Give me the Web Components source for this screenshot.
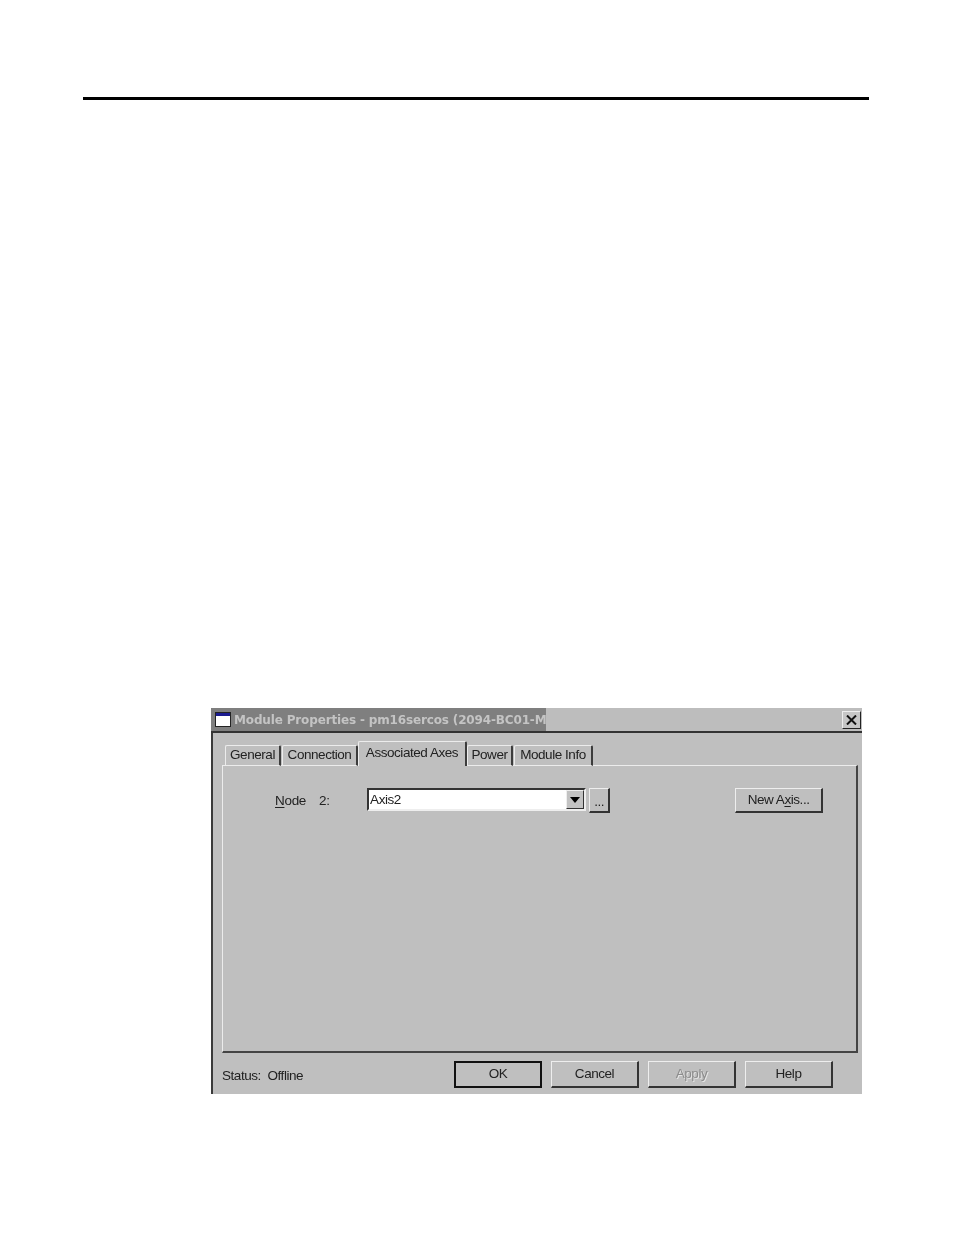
<!DOCTYPE html>
<html>
<head>
<meta charset="utf-8">
<title>Module Properties</title>
<style>
  html, body { margin: 0; padding: 0; background: #fff; }
  body { width: 954px; height: 1235px; overflow: hidden; font-family: "Liberation Sans", Arial, sans-serif; }
</style>
</head>
<body>
<doc-page>
  <module-dialog heading="Module Properties - pm16sercos (2094-BC01-M">
    <tab-strip>
      <dlg-tab w="56">General</dlg-tab>
      <dlg-tab w="76">Connection</dlg-tab>
      <dlg-tab w="109" active>Associated Axes</dlg-tab>
      <dlg-tab w="46">Power</dlg-tab>
      <dlg-tab w="79">Module Info</dlg-tab>
    </tab-strip>
    <axes-panel></axes-panel>
    <dlg-footer></dlg-footer>
  </module-dialog>
</doc-page>

<script>
function shadow(el, html) {
  el.attachShadow({ mode: "open" });
  el.shadowRoot.innerHTML = html;
}

class DocPage extends HTMLElement {
  connectedCallback() {
    shadow(this, `
      <style>
        :host { display: block; padding: 97px 85px 0 83px; }
        .rule { height: 3px; background: #000; }
        .body { padding: 608px 7px 0 128px; }
      </style>
      <div class="rule"></div>
      <div class="body"><slot></slot></div>
    `);
  }
}

class ModuleDialog extends HTMLElement {
  connectedCallback() {
    shadow(this, `
      <style>
        :host {
          display: flex; flex-direction: column; box-sizing: border-box;
          width: 651px; height: 386px; background: #bfbfbf;
          border-left: 2px solid #3a3a3a;
          font: 13.5px "Liberation Sans", Arial, sans-serif; letter-spacing: -.45px; color: #222;
          filter: blur(.4px);
        }
        .bar {
          display: flex; align-items: center; height: 23px; flex: none;
          margin-left: -2px; background: #bdbdbd; border-bottom: 2px solid #333;
        }
        .grad {
          display: flex; align-items: center; gap: 3px; width: 335px; height: 100%;
          box-sizing: border-box; padding-left: 4px; background: #7f7f7f;
        }
        .title { font: bold 12px "DejaVu Sans", Verdana, sans-serif; letter-spacing: -.15px; color: #c4c4c4; white-space: nowrap; }
        svg { display: block; flex: none; }
        .close {
          margin-left: auto; margin-right: 1px; width: 19px; height: 18px; box-sizing: border-box;
          background: #c6c6c6; border: 1px solid; border-color: #eee #222 #222 #eee;
          display: flex; align-items: center; justify-content: center;
        }
      </style>
      <div class="bar">
        <div class="grad">
          <svg width="16" height="15" viewBox="0 0 16 15">
            <rect x=".5" y=".5" width="15" height="14" fill="#fff" stroke="#222"/>
            <rect x="1" y="1" width="14" height="3" fill="#1a1a90"/>
          </svg>
          <span class="title">${this.getAttribute("heading")}</span>
        </div>
        <div class="close">
          <svg width="11" height="10" viewBox="0 0 11 10"><path d="M1 .5l9 9M10 .5l-9 9" stroke="#111" stroke-width="2"/></svg>
        </div>
      </div>
      <slot></slot>
    `);
  }
}

class TabStrip extends HTMLElement {
  connectedCallback() {
    shadow(this, `
      <style>
        :host {
          display: flex; align-items: flex-end; flex: none; height: 32px;
          padding-left: 12px; gap: 1px; position: relative; z-index: 1;
        }
      </style>
      <slot></slot>
    `);
  }
}

class DlgTab extends HTMLElement {
  connectedCallback() {
    const on = this.hasAttribute("active");
    shadow(this, `
      <style>
        :host {
          display: flex; justify-content: center; box-sizing: border-box;
          width: ${this.getAttribute("w")}px; height: ${on ? 25 : 21}px;
          margin-bottom: -1px; padding-top: ${on ? 3 : 1}px;
          background: #bfbfbf; white-space: nowrap; line-height: 16px;
          border-top: 1px solid #ececec; border-left: 1px solid #ececec;
          border-right: 2px solid #3c3c3c; border-radius: 2px 2px 0 0;
          ${on ? "margin-left: -1px; margin-right: -1px; border-bottom: none;" : "border-bottom: 1px solid #ececec;"}
        }
      </style>
      <slot></slot>
    `);
  }
}

class AxesPanel extends HTMLElement {
  connectedCallback() {
    shadow(this, `
      <style>
        :host {
          display: block; box-sizing: border-box; flex: none;
          width: 636px; height: 288px; margin-left: 9px;
          border: solid; border-width: 1px 2px 2px 1px; border-color: #ececec #444 #444 #ececec;
        }
        .row { display: flex; align-items: flex-start; padding: 22px 0 0 52px; }
        .lbl { line-height: 22px; padding-top: 2px; white-space: nowrap; letter-spacing: -.3px; }
        .num { margin-left: 13px; width: 48px; }
        u { text-underline-offset: 2px; }
        .combo {
          display: flex; box-sizing: border-box; width: 219px; height: 23px;
          background: #fff; border: 2px solid; border-color: #333 #eee #eee #333;
        }
        .val { flex: 1; line-height: 19px; padding-left: 1px; }
        .drop {
          width: 18px; box-sizing: border-box; background: #c2c2c2;
          border: 1px solid; border-color: #eee #333 #333 #eee;
          display: flex; align-items: center; justify-content: center;
        }
        .tri { width: 0; height: 0; border: 5px solid transparent; border-top: 6px solid #000; border-bottom: 0; }
        .dots {
          margin-left: 3px; width: 21px; height: 25px; box-sizing: border-box;
          border: solid; border-color: #eee #333 #333 #eee; border-width: 1px 2px 2px 1px;
          display: flex; align-items: flex-end; justify-content: center; line-height: 19px;
        }
        .new {
          margin-left: 125px; width: 88px; height: 25px; box-sizing: border-box;
          border: solid; border-color: #eee #333 #333 #eee; border-width: 1px 2px 2px 1px;
          text-align: center; line-height: 21px;
        }
      </style>
      <div class="row">
        <span class="lbl"><u>N</u>ode</span>
        <span class="lbl num">2:</span>
        <div class="combo"><span class="val">Axis2</span><div class="drop"><div class="tri"></div></div></div>
        <div class="dots">...</div>
        <div class="new">New A<u>x</u>is...</div>
      </div>
    `);
  }
}

class DlgFooter extends HTMLElement {
  connectedCallback() {
    shadow(this, `
      <style>
        :host { display: flex; align-items: flex-start; flex: 1; padding: 8px 0 0 9px; }
        .status { width: 232px; padding-top: 7px; line-height: 16px; white-space: pre; }
        .btns { display: flex; gap: 9px; }
      </style>
      <span class="status">Status:  Offline</span>
      <div class="btns">
        <dlg-button default>OK</dlg-button>
        <dlg-button>Cancel</dlg-button>
        <dlg-button disabled>Apply</dlg-button>
        <dlg-button>Help</dlg-button>
      </div>
    `);
  }
}

class DlgButton extends HTMLElement {
  connectedCallback() {
    const def = this.hasAttribute("default");
    const off = this.hasAttribute("disabled");
    shadow(this, `
      <style>
        :host {
          display: block; box-sizing: border-box; width: 88px; height: 27px;
          text-align: center; line-height: 23px;
          border: solid; border-width: 1px 2px 2px 1px; border-color: #eee #333 #333 #eee;
          ${def ? "border: 2px solid #111; line-height: 21px;" : ""}
          ${off ? "color: #8c8c8c; text-shadow: 1px 1px 0 #e6e6e6;" : ""}
        }
      </style>
      <slot></slot>
    `);
  }
}

customElements.define("doc-page", DocPage);
customElements.define("module-dialog", ModuleDialog);
customElements.define("tab-strip", TabStrip);
customElements.define("dlg-tab", DlgTab);
customElements.define("axes-panel", AxesPanel);
customElements.define("dlg-footer", DlgFooter);
customElements.define("dlg-button", DlgButton);
</script>
</body>
</html>
